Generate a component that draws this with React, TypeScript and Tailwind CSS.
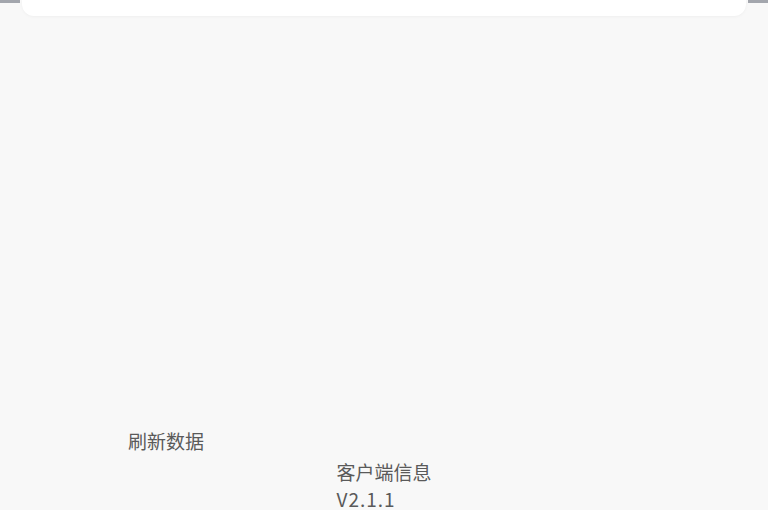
import React from "react";

export default function App() {
  return (
    <div
      className="w-[768px] h-[510px] overflow-hidden bg-[#f8f8f8] flex flex-col"
      style={{ fontFamily: '"Noto Sans CJK SC", "Noto Sans", sans-serif' }}
    >
      <div className="flex items-start">
        <div className="w-[20px] h-[3px] bg-[#a3a6ad]" />
        <div className="flex-1 mx-[2px] h-[16px] bg-white rounded-b-[12px] shadow-[0_1px_3px_rgba(0,0,0,0.04)]" />
        <div className="w-[20px] h-[3px] bg-[#a3a6ad]" />
      </div>
      <div className="flex-1" />
      <div className="pl-[128px] text-[19px] leading-[26px] text-[#5a5a5a]">
        刷新数据
      </div>
      <div className="mt-[4px] mb-[-2px] flex justify-center">
        <div className="w-[95px] text-[19px] leading-[27px] text-[#5a5a5a]">
          <div>客户端信息</div>
          <div className="tracking-[1px]">V2.1.1</div>
        </div>
      </div>
    </div>
  );
}
